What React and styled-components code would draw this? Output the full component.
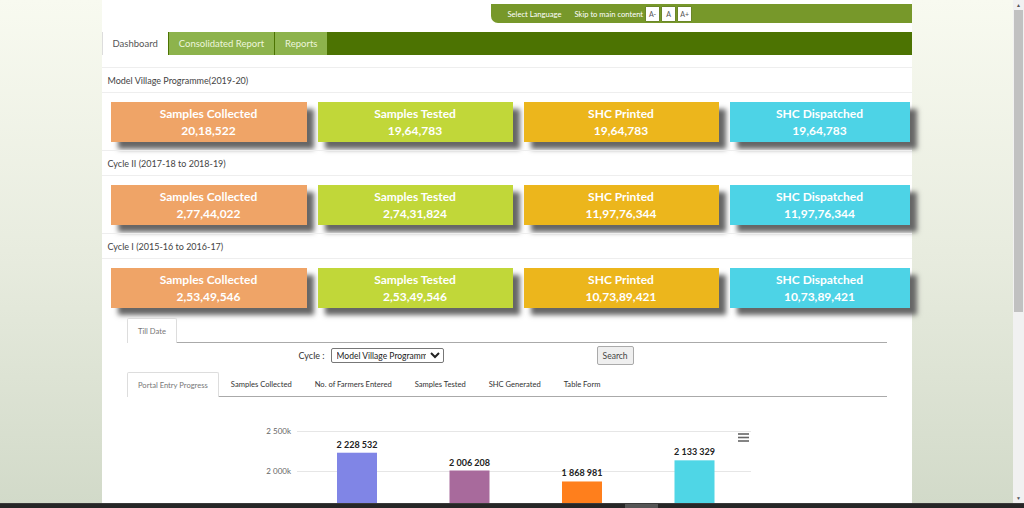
import React from 'react'
import styled, { createGlobalStyle } from 'styled-components'

const GlobalStyle = createGlobalStyle`
    html, body {
        margin: 0;
        padding: 0;
        overflow: hidden;
    }
    body {
        font-family: Lato, "Noto Sans", sans-serif;
        color: #444;
    }
`

const sections = [
    {
        title: 'Model Village Programme(2019-20)',
        values: ['20,18,522', '19,64,783', '19,64,783', '19,64,783'],
    },
    {
        title: 'Cycle II (2017-18 to 2018-19)',
        values: ['2,77,44,022', '2,74,31,824', '11,97,76,344', '11,97,76,344'],
    },
    {
        title: 'Cycle I (2015-16 to 2016-17)',
        values: ['2,53,49,546', '2,53,49,546', '10,73,89,421', '10,73,89,421'],
    },
]

const cardKinds = [
    { label: 'Samples Collected', color: '#efa467' },
    { label: 'Samples Tested', color: '#c1d739' },
    { label: 'SHC Printed', color: '#ecb61c' },
    { label: 'SHC Dispatched', color: '#4dd3e6' },
]

const chartTabs = [
    'Portal Entry Progress',
    'Samples Collected',
    'No. of Farmers Entered',
    'Samples Tested',
    'SHC Generated',
    'Table Form',
]

const bars = [
    { value: 2228532, label: '2 228 532', color: '#8085e6' },
    { value: 2006208, label: '2 006 208', color: '#a86a9c' },
    { value: 1868981, label: '1 868 981', color: '#ff7f1c' },
    { value: 2133329, label: '2 133 329', color: '#4fd6e6' },
]

function Chart() {
    // 500k per 40px, 2000k line sits at y=74
    const yFor = (v) => 74 - ((v - 2000000) / 500000) * 40
    return (
        <ChartSvg width="760" height="108" viewBox="0 0 760 108">
            <line x1="170" y1="34.5" x2="624" y2="34.5" stroke="#e6e6e6" />
            <line x1="170" y1="74.5" x2="624" y2="74.5" stroke="#e6e6e6" />
            <text x="164" y="37" textAnchor="end" fontSize="8" fill="#666">2 500k</text>
            <text x="164" y="77" textAnchor="end" fontSize="8" fill="#666">2 000k</text>
            {bars.map((b, i) => {
                const x = 210 + i * 112.5
                const y = yFor(b.value)
                return (
                    <g key={b.label}>
                        <rect x={x} y={y} width="40" height={108 - y} fill={b.color} />
                        <text x={x + 20} y={y - 5} textAnchor="middle" fontSize="9" fontWeight="700" fill="#222">
                            {b.label}
                        </text>
                    </g>
                )
            })}
            <g stroke="#666" strokeWidth="1.6">
                <line x1="611" y1="37" x2="622" y2="37" />
                <line x1="611" y1="40.5" x2="622" y2="40.5" />
                <line x1="611" y1="44" x2="622" y2="44" />
            </g>
        </ChartSvg>
    )
}

function App() {
    return (
        <>
            <GlobalStyle />
            <Screen>
                <Viewport>
                    <Page>
                        <Container>
                            <TopStrip>
                                <StripText>Select Language</StripText>
                                <StripText gap="6px">Skip to main content</StripText>
                                <SizeButton>A-</SizeButton>
                                <SizeButton>A</SizeButton>
                                <SizeButton>A+</SizeButton>
                            </TopStrip>

                            <MainTabs>
                                <MainTab active>Dashboard</MainTab>
                                <MainTab>Consolidated Report</MainTab>
                                <MainTab>Reports</MainTab>
                            </MainTabs>

                            <Sections>
                                {sections.map((s) => (
                                    <Section key={s.title}>
                                        <SectionHeader>{s.title}</SectionHeader>
                                        <CardRow>
                                            {cardKinds.map((k, i) => (
                                                <Card key={k.label} color={k.color}>
                                                    <span>{k.label}</span>
                                                    <span>{s.values[i]}</span>
                                                </Card>
                                            ))}
                                        </CardRow>
                                    </Section>
                                ))}
                            </Sections>

                            <Panel>
                                <TabLine>
                                    <SmallTab active>Till Date</SmallTab>
                                </TabLine>

                                <FilterRow>
                                    <FilterLabel>Cycle :</FilterLabel>
                                    <Select defaultValue="mvp">
                                        <option value="mvp">Model Village Programme(2019-20)</option>
                                        <option value="c2">Cycle II</option>
                                        <option value="c1">Cycle I</option>
                                    </Select>
                                    <SearchButton>Search</SearchButton>
                                </FilterRow>

                                <TabLine spaced>
                                    {chartTabs.map((t, i) => (
                                        <SmallTab key={t} active={i === 0}>{t}</SmallTab>
                                    ))}
                                </TabLine>

                                <Chart />
                            </Panel>
                        </Container>
                    </Page>
                    <ScrollTrack>
                        <ScrollArrow>▲</ScrollArrow>
                        <ScrollThumb />
                        <ScrollArrow>▼</ScrollArrow>
                    </ScrollTrack>
                </Viewport>
                <BottomBar>
                    <BarThumb />
                </BottomBar>
            </Screen>
        </>
    )
}

export default App

const Screen = styled.div`
    display: flex;
    flex-direction: column;
    width: 1024px;
    height: 508px;
`

const Viewport = styled.div`
    display: flex;
    height: 503px;
`

const Page = styled.div`
    flex: 1;
    overflow: hidden;
    background: linear-gradient(to bottom, #f8faf0 0%, #e8ecdf 50%, #d2dac9 100%);
`

const Container = styled.div`
    width: 810px;
    margin: 0 auto;
    min-height: 100%;
    background: #fff;
    padding-top: 4px;
`

const TopStrip = styled.div`
    display: flex;
    align-items: center;
    width: 421px;
    height: 19px;
    margin-left: auto;
    padding-left: 17px;
    box-sizing: border-box;
    background: #77982a;
    border-radius: 0 0 0 7px;
`

const StripText = styled.span`
    font-size: 7.6px;
    color: #fff;
    margin-left: ${(p) => p.gap || '0'};
    margin-right: ${(p) => (p.gap ? '3px' : '7px')};
`

const SizeButton = styled.span`
    display: flex;
    align-items: center;
    justify-content: center;
    width: 13px;
    height: 14px;
    margin-right: 3px;
    background: #fff;
    color: #555;
    font-size: 7px;
    box-shadow: 0 0 1px #333;
`

const MainTabs = styled.div`
    display: flex;
    height: 23px;
    margin-top: 9px;
    background: #4c7302;
`

const MainTab = styled.div`
    display: flex;
    align-items: center;
    padding: 0 10px;
    margin-right: 1px;
    font-size: 9.5px;
    background: ${(p) => (p.active ? '#fff' : '#8db34c')};
    color: ${(p) => (p.active ? '#555' : '#eef6dc')};
    border-left: ${(p) => (p.active ? '1px solid #ddd' : 'none')};
`

const Sections = styled.div`
    display: flex;
    flex-direction: column;
    margin-top: 12px;
`

const Section = styled.div`
    display: flex;
    flex-direction: column;
    padding-bottom: 8px;
`

const SectionHeader = styled.div`
    display: flex;
    align-items: center;
    height: 24px;
    padding-left: 6px;
    font-size: 9px;
    color: #444;
    border-top: 1px solid #eee;
    border-bottom: 1px solid #eee;
`

const CardRow = styled.div`
    display: grid;
    grid-template-columns: 196px 195px 195px 180px;
    column-gap: 11px;
    padding-left: 9px;
    margin-top: 9px;
`

const Card = styled.div`
    display: flex;
    flex-direction: column;
    align-items: center;
    justify-content: center;
    height: 40px;
    background: ${(p) => p.color};
    color: #fff;
    font-weight: 700;
    font-size: 12px;
    line-height: 17px;
    box-shadow: 7px 7px 5px #666;
`

const Panel = styled.div`
    padding: 2px 25px 0 25px;
`

const TabLine = styled.div`
    display: flex;
    align-items: flex-end;
    margin-top: ${(p) => (p.spaced ? '6px' : '0')};
    border-bottom: 1px solid #aaa;
`

const SmallTab = styled.div`
    display: flex;
    align-items: center;
    height: 24px;
    padding: 0 10.5px;
    font-size: 7.6px;
    color: ${(p) => (p.active ? '#777' : '#333')};
    background: #fff;
    border: 1px solid ${(p) => (p.active ? '#ddd' : 'transparent')};
    border-bottom: none;
    margin-bottom: ${(p) => (p.active ? '-1px' : '0')};
    border-radius: 2px 2px 0 0;
`

const FilterRow = styled.div`
    display: flex;
    align-items: center;
    height: 19px;
    margin-top: 3px;
    padding-left: 172px;
`

const FilterLabel = styled.span`
    font-size: 9px;
    color: #333;
    margin-right: 6px;
`

const Select = styled.select`
    width: 113px;
    height: 15px;
    padding: 0 1px;
    font-family: Lato, "Noto Sans", sans-serif;
    font-size: 8.5px;
    color: #222;
    border: 1px solid #777;
    border-radius: 2px;
    background: #fff;
`

const SearchButton = styled.button`
    height: 19px;
    width: 37px;
    margin-left: 153px;
    padding: 0;
    font-family: Lato, "Noto Sans", sans-serif;
    font-size: 8.5px;
    color: #444;
    background: #efefef;
    border: 1px solid #aaa;
    border-radius: 2px;
`

const ChartSvg = styled.svg`
    display: block;
    font-family: Lato, "Noto Sans", sans-serif;
`

const ScrollTrack = styled.div`
    display: flex;
    flex-direction: column;
    width: 11px;
    background: #f1f1f1;
`

const ScrollArrow = styled.div`
    height: 10px;
    font-size: 5px;
    line-height: 10px;
    text-align: center;
    color: #555;
`

const ScrollThumb = styled.div`
    height: 302px;
    margin: 0 1px auto;
    background: #c1c1c1;
`

const BottomBar = styled.div`
    display: flex;
    height: 5px;
    background: #262626;
    border-top: 1px solid #3a3a3a;
    box-sizing: border-box;
`

const BarThumb = styled.div`
    width: 33px;
    margin-left: 625px;
    background: #555;
`
